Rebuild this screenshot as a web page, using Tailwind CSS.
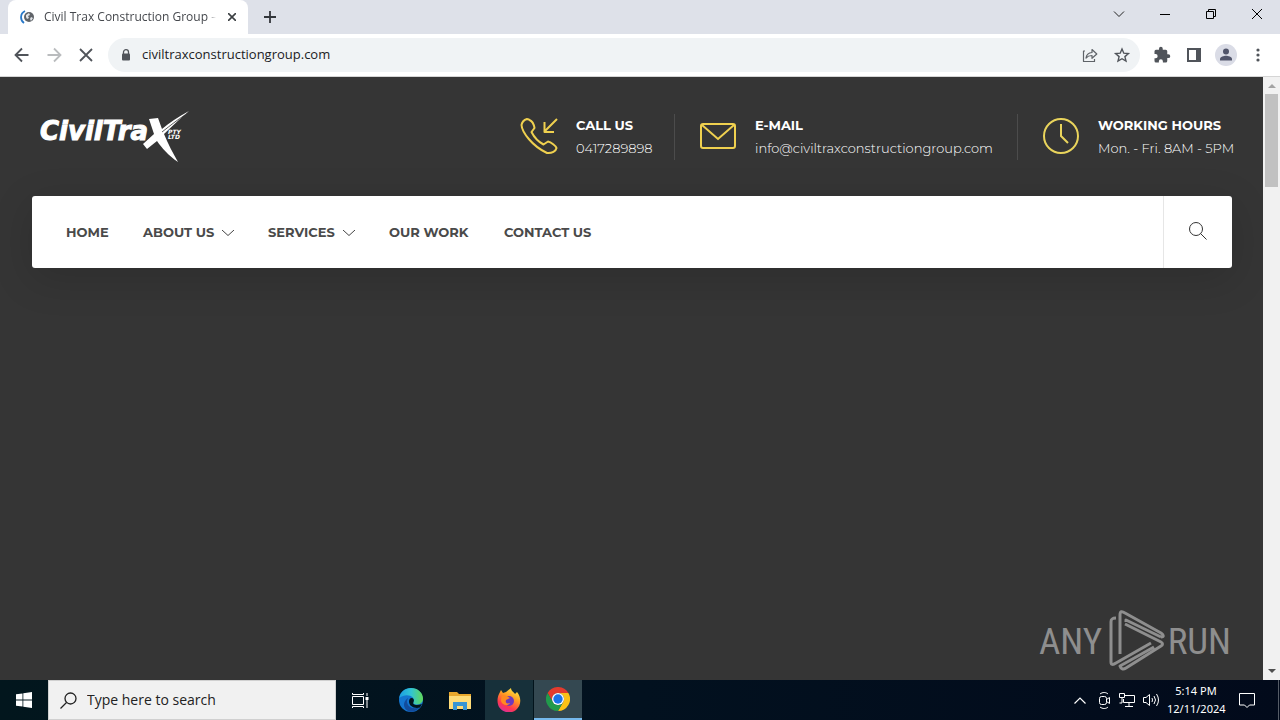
<!DOCTYPE html>
<html lang="en">
<head>
<meta charset="utf-8">
<title>Civil Trax Construction Group</title>
<script src="https://cdn.jsdelivr.net/npm/@tailwindcss/browser@4"></script>
</head>
<body class="flex h-screen flex-col overflow-hidden bg-white font-['Open_Sans','Noto_Sans',sans-serif] text-[#202124]">

<!-- Tab strip -->
<div class="flex h-[34px] shrink-0 bg-[#dee1e9] pl-2">
  <div class="flex w-60 items-center rounded-t-lg bg-white pl-3">
    <svg class="size-4 shrink-0" viewBox="0 0 16 16" fill="none"><path d="M5 2A7 7 0 0 0 4 14" stroke="#2878c8" stroke-width="1.8"/><circle cx="9" cy="8" r="5" fill="#5f6368"/><path d="M6 6l3-2 1 2-2 1 1 2-2 1-1-2zM11 8l2 1-2 3-1-2z" fill="#dfe3e8"/></svg>
    <span class="ml-2 w-[172px] overflow-hidden mask-r-from-95% text-xs whitespace-nowrap text-[#45484d]">Civil Trax Construction Group – C</span>
    <button aria-label="Close tab" class="ml-2 flex size-4 items-center justify-center"><svg class="size-2" viewBox="0 0 8 8" stroke="#3c4043" stroke-width="1.6"><path d="M0 0l8 8M8 0L0 8"/></svg></button>
  </div>
  <button aria-label="New tab" class="flex w-11 items-center justify-center"><svg class="size-3" viewBox="0 0 12 12" stroke="#33363b" stroke-width="1.8"><path d="M6 0v12M0 6h12"/></svg></button>
  <div class="ml-auto flex h-7">
    <button aria-label="Search tabs" class="flex w-[46px] items-center justify-center"><svg class="h-3 w-3" viewBox="0 0 12 12" fill="none" stroke="#222"><path d="M1 3.500l5 5 5-5"/></svg></button>
    <button aria-label="Minimize" class="flex w-[46px] items-center justify-center"><svg class="size-[10px]" viewBox="0 0 10 10" stroke="#000"><path d="M0 5.500h10"/></svg></button>
    <button aria-label="Restore" class="flex w-[46px] items-center justify-center"><svg class="size-[10px]" viewBox="0 0 10 10" fill="none" stroke="#000"><path d="M.5 2.500h7v7h-7zM2.500 2.500v-2h7v7h-2"/></svg></button>
    <button aria-label="Close window" class="flex w-[46px] items-center justify-center"><svg class="size-[10px]" viewBox="0 0 10 10" stroke="#000"><path d="M0 0l10 10M10 0L0 10"/></svg></button>
  </div>
</div>

<!-- Toolbar -->
<div class="flex h-[43px] shrink-0 items-center border-b border-[#d5d5d5] px-3">
  <div class="flex w-24 items-center gap-3">
    <button aria-label="Back"><svg class="size-5" viewBox="0 0 20 20" fill="none" stroke="#50545a" stroke-width="1.8"><path d="M16.500 10H3.500M10 3.500L3.500 10l6.500 6.500"/></svg></button>
    <button aria-label="Forward"><svg class="size-5" viewBox="0 0 20 20" fill="none" stroke="#babcbe" stroke-width="1.8"><path d="M3.500 10h13M10 3.500l6.500 6.500-6.500 6.500"/></svg></button>
    <button aria-label="Stop"><svg class="size-5" viewBox="0 0 20 20" fill="none" stroke="#50545a" stroke-width="1.8"><path d="M4 4l12 12M16 4L4 16"/></svg></button>
  </div>
  <div class="flex h-[34px] flex-1 items-center rounded-full bg-[#f0f3f5] pr-[9px] pl-3">
    <svg class="h-3 w-3" viewBox="0 0 12 12" fill="none"><rect x="2" y="4.500" width="8" height="7" rx="1" fill="#50545a"/><path d="M3.500 5V3a2.500 2.300 0 0 1 5 0v2" stroke="#50545a" stroke-width="1.3"/></svg>
    <input aria-label="Address" class="ml-[10px] min-w-0 flex-1 bg-transparent text-[13px] outline-none" value="civiltraxconstructiongroup.com">
    <button aria-label="Share" class="mr-[15px]"><svg class="size-4" viewBox="0 0 16 16" fill="none" stroke="#5f6368" stroke-width="1.2"><path d="M3 4H1.500v10.500h11V12M4 11c.5-3.500 2.500-5.200 6-5.500V2.500L14.800 7 10 11.300V8.500c-2.500 0-4.500.7-6 2.500z" stroke-linejoin="round"/></svg></button>
    <button aria-label="Bookmark"><svg class="size-[18px]" viewBox="0 0 18 18" fill="none" stroke="#50545a" stroke-width="1.4"><path d="M9 3l1.800 4.200 4.600.4-3.500 3 1.100 4.500L9 12.700l-4 2.400 1.100-4.500-3.500-3 4.600-.4z"/></svg></button>
  </div>
  <div class="flex items-center pl-[13px]">
    <button aria-label="Extensions" class="mr-4"><svg class="size-[18px]" viewBox="0 0 24 24" fill="#50545a"><path d="M20.500 11H19V7a2 2 0 0 0-2-2h-4V3.500a2.500 2.500 0 0 0-5 0V5H4a2 2 0 0 0-2 2v3.800h1.500a2.700 2.700 0 0 1 0 5.400H2V20a2 2 0 0 0 2 2h3.800v-1.500a2.700 2.700 0 0 1 5.400 0V22H17a2 2 0 0 0 2-2v-4h1.500a2.500 2.500 0 0 0 0-5z"/></svg></button>
    <button aria-label="Side panel" class="mr-[14px]"><svg class="size-[14px]" viewBox="0 0 14 14"><path d="M0 0h14v14H0zM2 2v10h7V2z" fill="#50545a" fill-rule="evenodd"/></svg></button>
    <button aria-label="Profile" class="mr-[11px]"><svg class="size-[22px]" viewBox="0 0 22 22"><circle cx="11" cy="11" r="11" fill="#dadce6"/><circle cx="11" cy="7.500" r="3" fill="#50546a"/><path d="M5 16.500v-1.500c0-2.300 4-3.200 6-3.200s6 .9 6 3.200v1.500z" fill="#50546a"/></svg></button>
    <button aria-label="Menu"><svg class="h-4 w-5" viewBox="0 0 20 16" fill="#50545a"><circle cx="10" cy="3" r="1.600"/><circle cx="10" cy="8" r="1.600"/><circle cx="10" cy="13" r="1.600"/></svg></button>
  </div>
</div>

<!-- Page -->
<div class="flex min-h-0 flex-1">
  <div class="relative flex-1 overflow-hidden bg-[#353535] pr-[31px] pl-8 font-['Montserrat','Inter',sans-serif]">
    <header class="flex h-[119px] items-center justify-between pl-2">
      <a href="#" aria-label="CivilTrax Pty Ltd" class="text-white">
        <svg class="h-[54px] w-[150px]" viewBox="0 0 150 54" fill="#fff">
          <text x="0" y="30" font-family="DejaVu Sans" font-weight="700" font-style="italic" font-size="26" stroke="#fff" stroke-width="1">CivilTra</text>
          <path d="M109 9l9-1 4 11C129 13 138 7 149 1C140 9 132 16 124 24C128 34 133 43 138 52C128 45 122 38 117 31L107 39l-4-5L114 24z"/>
          <path d="M145 5C137 10 131 15 122 22" fill="none" stroke="#353535" stroke-width=".8"/>
          <text x="128" y="24" font-family="DejaVu Sans" font-weight="700" font-style="italic" font-size="6">PTY</text>
          <text x="128" y="29" font-family="DejaVu Sans" font-weight="700" font-style="italic" font-size="6">LTD</text>
        </svg>
      </a>
      <div class="flex text-[13px] whitespace-nowrap text-white">
        <div class="flex h-[46px] items-center">
          <svg class="mr-[18px] size-[38px]" viewBox="0 0 38 38" fill="none" stroke="#efd04f" stroke-width="2" stroke-linejoin="round"><path d="M7 1C4 2 2 4 1.500 7C2 14 12 28 27 35C32 35.500 36 33 36.500 30C36 28 31 24 28 23.500L23.500 26.500C17 23 14 19 11.500 14L14.500 10C14 7 12 3 9.500 2C9 1 8 1 7 1z"/><path d="M37 1L25 13M24.500 4v10H34"/></svg>
          <div class="w-[78px] leading-[23px]"><div class="font-bold">CALL US</div><div class="font-light">0417289898</div></div>
        </div>
        <div class="ml-5 flex h-[46px] items-center border-l border-[#4c4c4c] pl-6">
          <svg class="mr-[18px] size-[38px]" viewBox="0 0 38 38" fill="none" stroke="#efd04f" stroke-width="2"><rect x="2" y="6" width="34" height="24" rx="2"/><path d="M3 7l16 14L35 7"/></svg>
          <div class="w-[242px] leading-[23px]"><div class="font-bold">E-MAIL</div><div class="font-light">info@civiltraxconstructiongroup.com</div></div>
        </div>
        <div class="ml-5 flex h-[46px] items-center border-l border-[#4c4c4c] pl-6">
          <svg class="mr-[18px] size-[38px]" viewBox="0 0 38 38" fill="none" stroke="#e9d45c" stroke-width="2"><circle cx="19" cy="18" r="17"/><path d="M19 6v12l7 7"/></svg>
          <div class="w-[134px] leading-[23px]"><div class="font-bold">WORKING HOURS</div><div class="font-light">Mon. - Fri. 8AM - 5PM</div></div>
        </div>
      </div>
    </header>
    <nav class="flex h-[72px] items-center justify-between rounded-[3px] bg-white pl-[34px] text-[13px] font-bold whitespace-nowrap text-[#4a4a4a] shadow-[0_10px_40px_rgba(0,0,0,0.15)]">
      <div class="flex gap-[34px] pt-[2px]">
        <a href="#" class="w-[43px]">HOME</a>
        <a href="#" class="flex w-[91px] items-center justify-between">ABOUT US<svg class="h-[6px] w-3" viewBox="0 0 12 6" fill="none" stroke="#444"><path d="M0 0l6 5.500L12 0"/></svg></a>
        <a href="#" class="flex w-[87px] items-center justify-between">SERVICES<svg class="h-[6px] w-3" viewBox="0 0 12 6" fill="none" stroke="#444"><path d="M0 0l6 5.500L12 0"/></svg></a>
        <a href="#" class="w-[81px]">OUR WORK</a>
        <a href="#">CONTACT US</a>
      </div>
      <button aria-label="Search" class="flex h-full w-[69px] items-center justify-center border-l border-[#e6e6e6] pb-[2px]"><svg class="size-[18px]" viewBox="0 0 18 18" fill="none" stroke="#333"><circle cx="7" cy="7" r="6.500"/><path d="M11.500 11.500l6 6"/></svg></button>
    </nav>
    <!-- Watermark -->
    <div class="absolute right-8 bottom-2 flex items-center">
      <svg class="h-[62px] w-[192px]" viewBox="0 0 192 62" fill="#8e8e8e" font-family="'Roboto Condensed','Liberation Sans Narrow','Liberation Sans',sans-serif" font-weight="400" font-size="37">
        <text x="0" y="44">ANY</text>
        <g fill="none" stroke="#8e8e8e" stroke-width="3" stroke-linejoin="round"><path d="M77 8c-4 0-5 1-5 4v40c0 3 2 3 5 1l35-20"/><path d="M81 44V5c0-4 2-4 5-2l36 20c3 2 3 4 0 4"/><path d="M122 27L87 10v2"/><path d="M86 14l36 18c2 1 2 3 0 4L87 58c-3 2-5 1-6-2l34-19"/></g>
        <text x="192" y="44" text-anchor="end">RUN</text>
      </svg>
    </div>
  </div>
  <!-- Scrollbar -->
  <div class="flex w-[17px] shrink-0 flex-col items-center bg-[#f1f1f1]">
    <svg class="h-[17px] w-4 shrink-0" viewBox="0 0 16 17" fill="#a3a3a3"><path d="M4 11l4-4 4 4z"/></svg>
    <div class="h-[93px] w-[13px] bg-[#c1c1c1]"></div>
    <svg class="mt-auto h-[17px] w-4 shrink-0" viewBox="0 0 16 17" fill="#505050"><path d="M4 6l4 4 4-4z"/></svg>
  </div>
</div>

<!-- Taskbar -->
<div class="flex h-10 shrink-0 bg-linear-to-r from-[#02161d] via-[#02111f] to-[#020a1b] text-white">
  <button aria-label="Start" class="flex w-12 items-center justify-center"><svg class="size-4" viewBox="0 0 16 16" fill="#fff"><path d="M0 2.300L6.500 1.400v6.200H0zM7.300 1.300L16 0v7.600H7.300zM0 8.400h6.500v6.200L0 13.700zM7.300 8.400H16V16l-8.700-1.300z"/></svg></button>
  <label class="flex w-72 items-center border border-[#d0d0d0] bg-[#f1f1f1] pl-[11px]">
    <svg class="size-[17px]" viewBox="0 0 17 17" fill="none" stroke="#222" stroke-width="1.3"><circle cx="10.500" cy="6.500" r="5.500"/><path d="M6.500 10.500L.5 16.500"/></svg>
    <input aria-label="Search" placeholder="Type here to search" class="ml-[10px] min-w-0 flex-1 bg-transparent text-sm outline-none placeholder:text-[#222]">
  </label>
  <button aria-label="Task view" class="flex w-12 items-center justify-center"><svg class="size-[17px]" viewBox="0 0 17 17" fill="none" stroke="#fff"><path d="M.5 4.500h11v8H.5zM.5 1v1.500h11V1M.5 16v-1.500h11V16M15 1v3M15 8v8"/><path d="M13.500 5h3v3h-3z" fill="#fff" stroke="none"/></svg></button>
  <button aria-label="Edge" class="flex w-[53px] items-center justify-center"><svg class="size-6" viewBox="0 0 24 24"><defs><linearGradient id="e" x2="1"><stop stop-color="#1b9de2"/><stop offset=".5" stop-color="#31c4d3"/><stop offset="1" stop-color="#62d957"/></linearGradient></defs><circle cx="12" cy="12" r="12" fill="#1475cf"/><path d="M.2 10C1 4 6 0 12 0c7 0 12 5 12 10.500 0 4-3 6-6.500 6-3 0-4-1-3-2.500C17 9 8 4 .2 10z" fill="url(#e)"/><path d="M8 13c0 6 6 9 13 6-3 4-7 5.500-11 4.500C4 21.500 3 14 9 10z" fill="#124c9c"/><path d="M14.500 14c-1.500 3 3 4 8.500 2l-2 3.500C15 21 10 18 10 13.500c0-2 1-3.300 2.500-3.500 2 0 3 2 2 4z" fill="#02151e"/></svg></button>
  <button aria-label="File Explorer" class="flex w-12 items-center pl-3"><svg class="h-[19px] w-[22px]" viewBox="0 0 22 19"><path d="M0 1h8l2 2h12v15H0z" fill="#e9a82d"/><path d="M0 5h22v13H0z" fill="#ffdc78"/><path d="M4 19v-8h14v8h-4v-4H8v4z" fill="#3795d4"/></svg></button>
  <button aria-label="Firefox" class="flex w-[49px] items-center justify-center border-r border-[#02131b] bg-[#17303a]"><svg class="size-6" viewBox="0 0 24 24"><defs><linearGradient id="f" x1=".8" x2=".3" y2="1"><stop stop-color="#fff04a"/><stop offset=".4" stop-color="#ff9b22"/><stop offset=".75" stop-color="#ff374f"/><stop offset="1" stop-color="#d92f9b"/></linearGradient></defs><path d="M2 6l2-4 2 3 3-1 5-4c0 3 3 4 4 6l2-2c5 6 4 14-1 18-5 4-13 3-17-3C0 15 0 10 2 6z" fill="url(#f)"/><circle cx="12" cy="13" r="5" fill="#6d38bd"/><path d="M5 7l5 1 3 2-4 2c-1 3 1 4 4 3-2 4-9 2-9-3z" fill="#ff8a20"/></svg></button>
  <button aria-label="Chrome" class="flex w-12 items-center justify-center border-b-2 border-[#76b9ed] bg-[#344851]"><svg class="size-6" viewBox="0 0 24 24"><path d="M1.600 6A12 12 0 0 1 22.400 6H12a6 6 0 0 0-5.200 9z" fill="#e33b2e"/><path d="M22.400 6A12 12 0 0 1 12 24l5.200-9A6 6 0 0 0 12 6z" fill="#fbc116"/><path d="M1.600 6A12 12 0 0 0 12 24l5.200-9A6 6 0 0 1 6.800 15z" fill="#219a4b"/><circle cx="12" cy="12" r="6" fill="#fff"/><circle cx="12" cy="12" r="4.700" fill="#1a73e8"/></svg></button>
  <div class="ml-auto flex items-center">
    <button aria-label="Show hidden icons" class="mr-3"><svg class="h-[7px] w-3" viewBox="0 0 12 7" fill="none" stroke="#fff" stroke-width="1.2"><path d="M.5 6.500L6 1l5.500 5.500"/></svg></button>
    <svg class="mr-2 h-[17px] w-[13px]" viewBox="0 0 13 17" fill="none" stroke="#fff"><rect x="1.500" y="4.500" width="7" height="8" rx="2"/><path d="M8.500 7.500l3-2v6l-3-2M2 2c2.500-2 6-2 8 0M2 15c2.500 2 6 2 8 0"/></svg>
    <svg class="mr-2 h-[14px] w-4" viewBox="0 0 16 14" fill="none" stroke="#fff"><path d="M6 2.500h9.500v7H4.500V6M10 9.500v3.500M6 13.500h8M.5.500h5v4h-5zM3 4.500v5.500H.5"/></svg>
    <svg class="mr-[7px] h-[14px] w-[17px]" viewBox="0 0 17 14" fill="none" stroke="#fff"><path d="M.5 4.500H3l3.500-3v11L3 9.500H.5zM9 5q1 2 0 4M11 3q3 4 0 8M13.500 1q4 6 0 12"/></svg>
    <div class="w-[58px] text-center font-['Noto_Sans'] text-[11px] leading-[18px] whitespace-nowrap"><div>5:14 PM</div><div>12/11/2024</div></div>
    <button aria-label="Notifications" class="mr-[23px] ml-[14px]"><svg class="h-[17px] w-4" viewBox="0 0 16 17" fill="none" stroke="#fff"><path d="M.5 1.500h15v11.500h-5L8 15.500 5.500 13h-5z"/></svg></button>
    <div class="h-10 w-[2px] border-l border-[#555b66]"></div>
  </div>
</div>
</body>
</html>
